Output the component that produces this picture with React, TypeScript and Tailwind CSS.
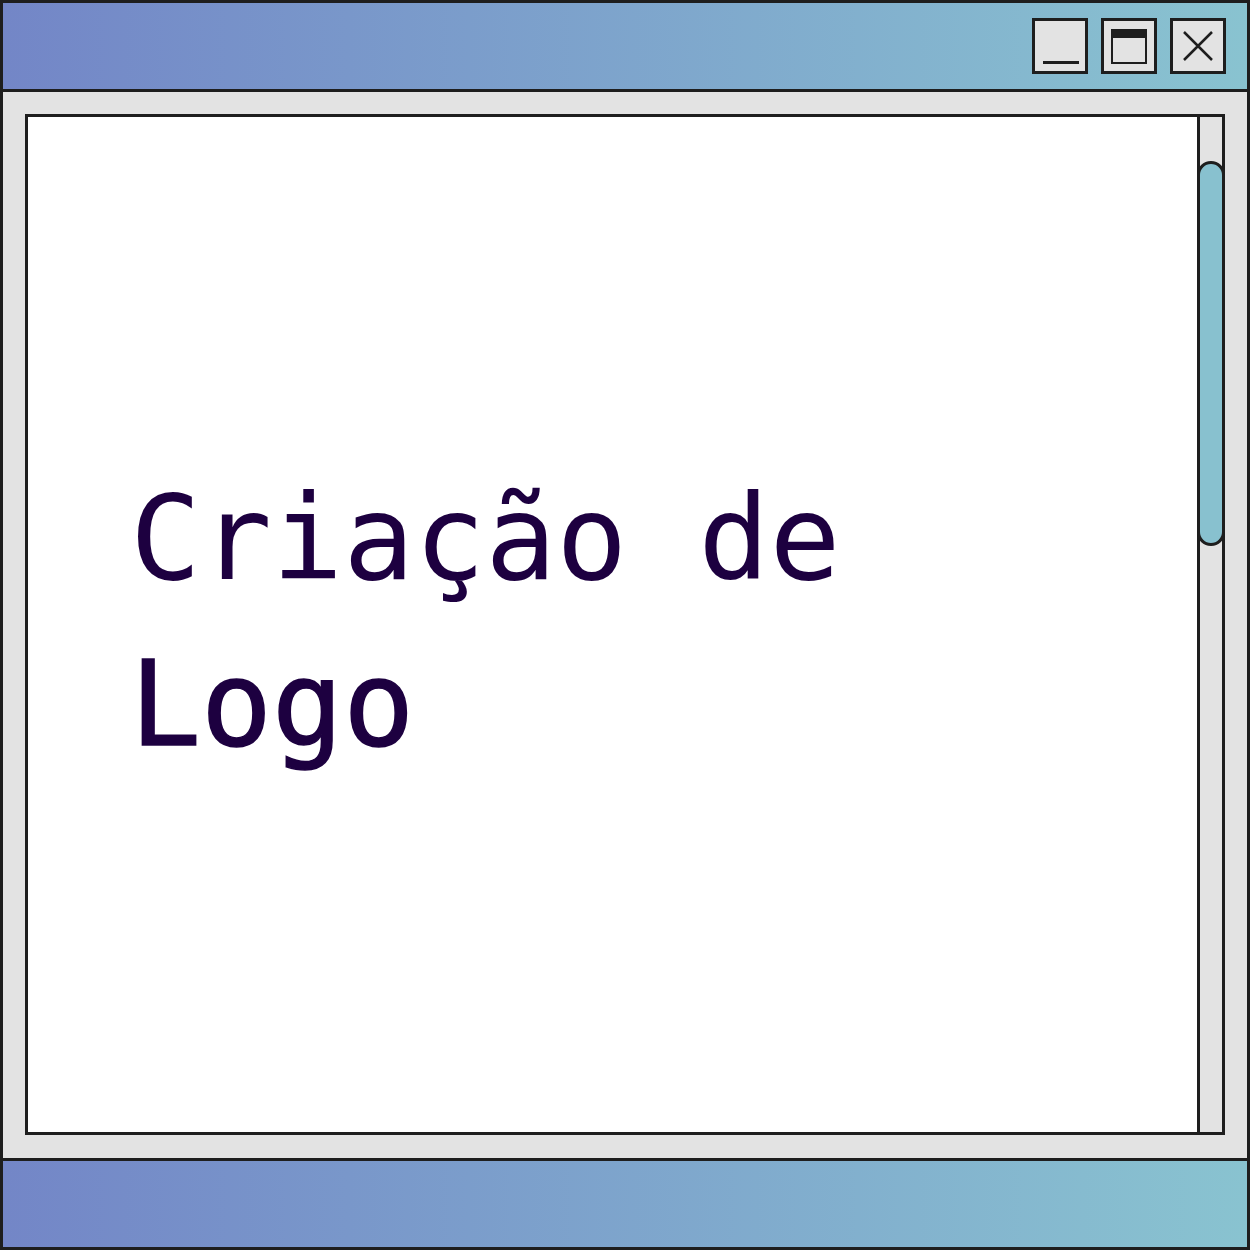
export default function App() {
  return (
    <div className="w-[1250px] h-[1250px] border-[3px] border-[#1e1e1e] flex flex-col bg-[#e3e3e3]">
      <div className="h-[89px] shrink-0 border-b-[3px] border-[#1e1e1e] bg-gradient-to-r from-[#7386c7] to-[#89c3d0] flex items-center justify-end pr-[21px] gap-[13px]">
        <div className="w-[56px] h-[56px] border-[3px] border-[#1e1e1e] bg-[#e3e3e3] relative">
          <div className="absolute left-[8px] top-[40px] w-[36px] h-[3px] bg-[#1e1e1e]" />
        </div>
        <div className="w-[56px] h-[56px] border-[3px] border-[#1e1e1e] bg-[#e3e3e3] flex items-center justify-center">
          <div className="w-[36px] h-[35px] border-[2.5px] border-t-[9px] border-[#1e1e1e]" />
        </div>
        <div className="w-[56px] h-[56px] border-[3px] border-[#1e1e1e] bg-[#e3e3e3] flex items-center justify-center">
          <svg width="32" height="32" viewBox="0 0 32 32">
            <path d="M2 2 L30 30 M30 2 L2 30" stroke="#1e1e1e" strokeWidth="2.5" fill="none" />
          </svg>
        </div>
      </div>
      <div className="flex-1 p-[22px] pb-[23px] flex">
        <div className="flex-1 border-[3px] border-[#1e1e1e] bg-white flex">
          <div className="flex-1 flex items-center pl-[102px] pb-[8px]">
            <div
              className="text-[118px] leading-[166px] text-[#1d0040]"
              style={{ fontFamily: '"DejaVu Sans Mono", "Liberation Mono", monospace' }}
            >
              <div>Criação de</div>
              <div className="[-webkit-text-stroke:1.5px_#1d0040]">Logo</div>
            </div>
          </div>
          <div className="w-[25px] border-l-[3px] border-[#1e1e1e] bg-[#e3e3e3] relative">
            <div className="absolute left-[-3px] right-[-3px] top-[44px] h-[385px] border-[3px] border-[#1e1e1e] rounded-full bg-[#88c1cf]" />
          </div>
        </div>
      </div>
      <div className="h-[89px] shrink-0 border-t-[3px] border-[#1e1e1e] bg-gradient-to-r from-[#7386c7] to-[#89c3d0]" />
    </div>
  );
}
